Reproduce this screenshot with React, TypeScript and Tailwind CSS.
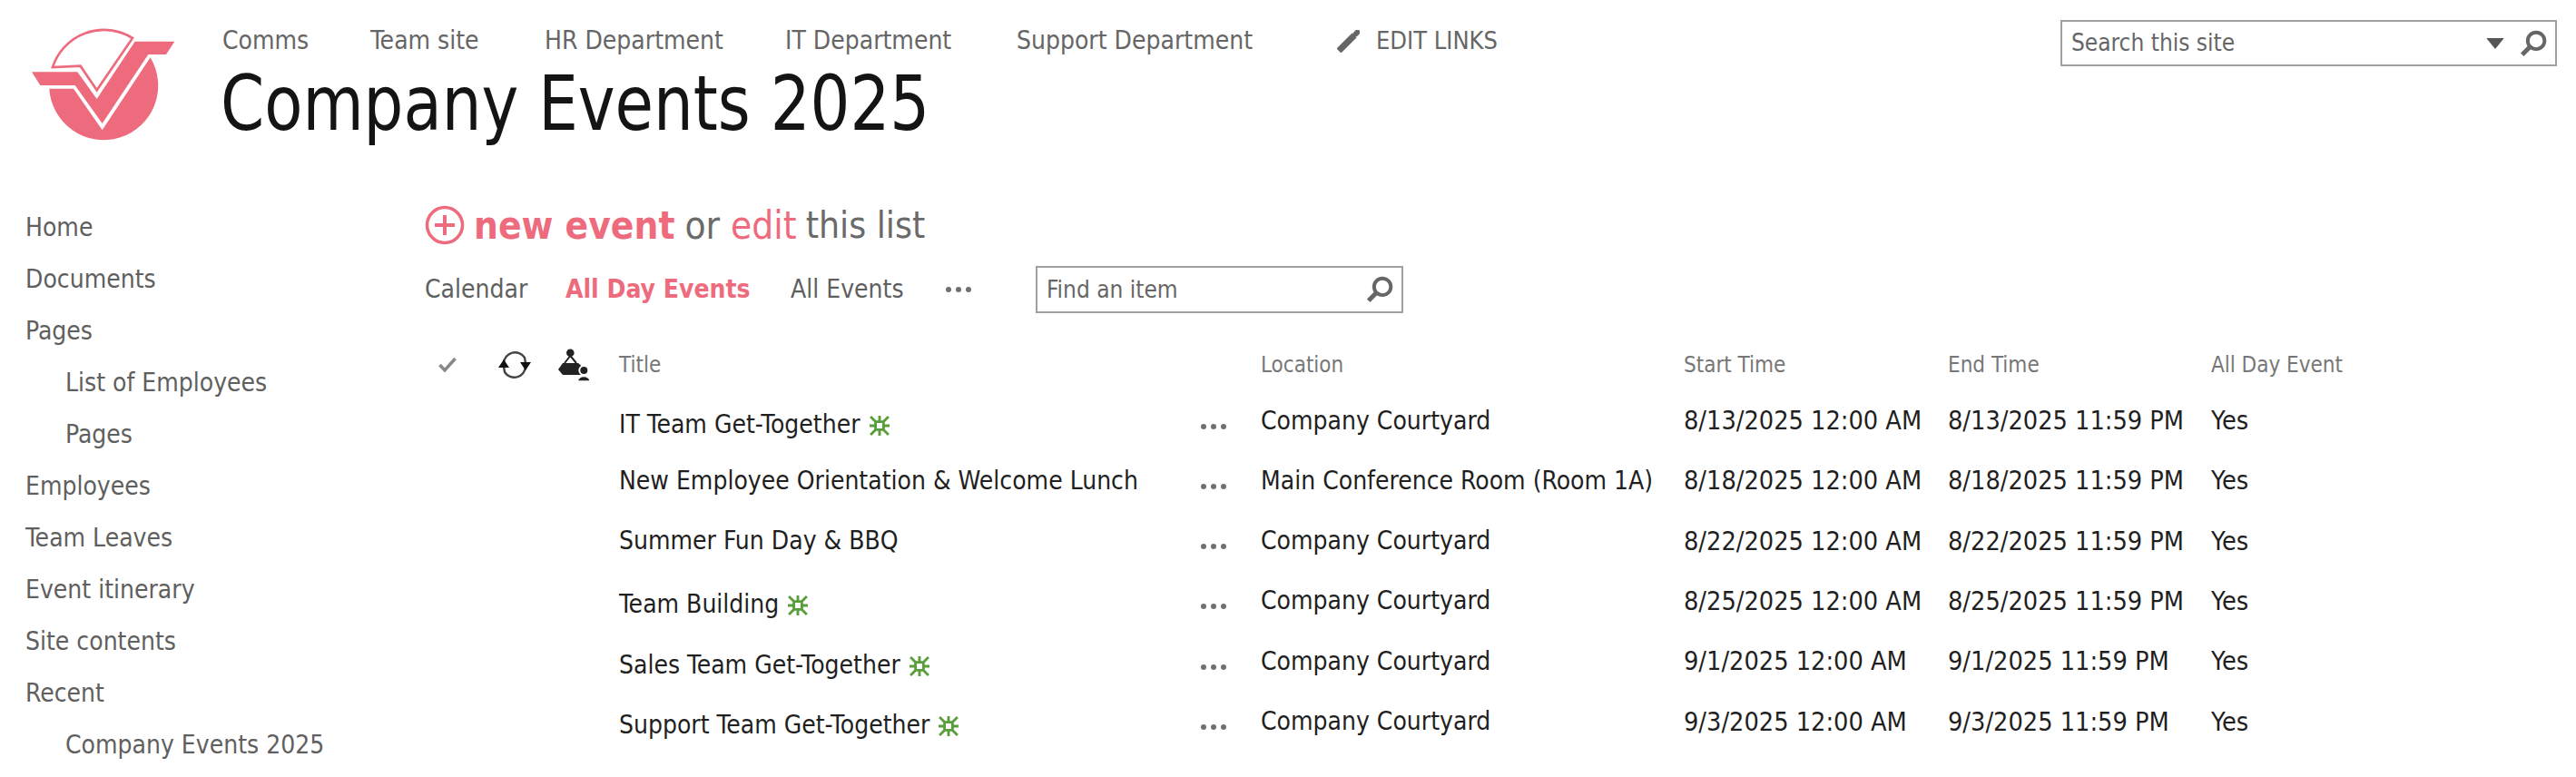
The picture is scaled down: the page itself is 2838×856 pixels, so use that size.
const font = "[font-family:'DejaVu_Sans_Condensed','DejaVu_Sans',sans-serif]"

const pink = 'text-[#ee6b7e]'

const topLinks = [
  { label: 'Comms', className: 'w-[163px]' },
  { label: 'Team site', className: 'w-[192px]' },
  { label: 'HR Department', className: 'w-[265px]' },
  { label: 'IT Department', className: 'w-[255px]' },
  { label: 'Support Department', className: 'w-[353px]' },
]

const sideLinks = [
  { label: 'Home' },
  { label: 'Documents' },
  { label: 'Pages' },
  { label: 'List of Employees', sub: true },
  { label: 'Pages', sub: true },
  { label: 'Employees' },
  { label: 'Team Leaves' },
  { label: 'Event itinerary' },
  { label: 'Site contents' },
  { label: 'Recent' },
  { label: 'Company Events 2025', sub: true },
]

const rows = [
  { title: 'IT Team Get-Together', isNew: true, location: 'Company Courtyard', start: '8/13/2025 12:00 AM', end: '8/13/2025 11:59 PM', h: 'h-[65px]' },
  { title: 'New Employee Orientation & Welcome Lunch', isNew: false, location: 'Main Conference Room (Room 1A)', start: '8/18/2025 12:00 AM', end: '8/18/2025 11:59 PM', h: 'h-[67px]' },
  { title: 'Summer Fun Day & BBQ', isNew: false, location: 'Company Courtyard', start: '8/22/2025 12:00 AM', end: '8/22/2025 11:59 PM', h: 'h-[66px]' },
  { title: 'Team Building', isNew: true, location: 'Company Courtyard', start: '8/25/2025 12:00 AM', end: '8/25/2025 11:59 PM', h: 'h-[66px]' },
  { title: 'Sales Team Get-Together', isNew: true, location: 'Company Courtyard', start: '9/1/2025 12:00 AM', end: '9/1/2025 11:59 PM', h: 'h-[67px]' },
  { title: 'Support Team Get-Together', isNew: true, location: 'Company Courtyard', start: '9/3/2025 12:00 AM', end: '9/3/2025 11:59 PM', h: 'h-[66px]' },
]

const Logo = () => (
  <svg viewBox="0 0 720 510" className="w-[240px] h-[170px] shrink-0">
    <path d="M174 222 A178 178 0 0 1 438 126 L320 298 L266 218 Z" fill="none" stroke="#ee6b7e" strokeWidth="8" />
    <path d="M105 238 L256 238 L320 327 L446 137 L577 137 L549 180 L490 180 L338 408 L248 282 L133 282 Z" fill="#ee6b7e" />
    <path d="M163 293 L243 293 L338 430 L497 190 A180 180 0 1 1 163 293 Z" fill="#ee6b7e" />
  </svg>
)

const SearchIcon = ({ className }: { className: string }) => (
  <svg viewBox="0 0 26 26" className={className}>
    <circle cx="15.5" cy="10.5" r="7.5" fill="none" stroke="#666" strokeWidth="3.2" />
    <path d="M9.5 16.5 L3 23" stroke="#666" strokeWidth="4" />
  </svg>
)

const Dots = () => (
  <svg viewBox="0 0 30 6" className="w-[30px] h-[6px]">
    <circle cx="4" cy="3" r="3" fill="#707070" />
    <circle cx="15" cy="3" r="3" fill="#707070" />
    <circle cx="26" cy="3" r="3" fill="#707070" />
  </svg>
)

const NewIcon = () => (
  <svg viewBox="0 0 20 20" className="w-[22px] h-[22px] ml-[10px] inline-block align-[-3px]">
    <path d="M6 6 H14 V14 H6 Z M10 0 V6 M10 14 V20 M0 10 H6 M14 10 H20 M1 1 L6 6 M19 1 L14 6 M1 19 L6 14 M19 19 L14 14" fill="none" stroke="#5a9e3c" strokeWidth="2.6" />
  </svg>
)

const App = () => {
  return (
    <div className={`w-[2838px] h-[856px] overflow-hidden bg-white ${font}`}>
      <header className="flex h-[200px]">
        <Logo />
        <div className="pl-[5px] pt-[26px]">
          <nav className="flex items-center h-[38px] text-[28px] text-[#666]">
            {topLinks.map((l) => (
              <span key={l.label} className={l.className}>{l.label}</span>
            ))}
            <svg viewBox="0 0 25 25" className="w-[25px] h-[25px] mr-[18px]">
              <path d="M2 23 L19 6" stroke="#666" strokeWidth="7" />
              <path d="M20.5 4.5 L22.5 2.5" stroke="#666" strokeWidth="6" strokeLinecap="round" />
            </svg>
            <span className="text-[27px]">EDIT LINKS</span>
          </nav>
          <h1 className="text-[84px] leading-[100px] text-[#141414] -ml-[2px] origin-left scale-x-[0.913] whitespace-nowrap">Company Events 2025</h1>
        </div>
        <div className="ml-auto mr-[21px] mt-[22px] w-[547px] h-[51px] border-2 border-[#a0a0a0] flex items-center pl-[10px] pr-[8px] text-[26px] text-[#666]">
          <span className="flex-1">Search this site</span>
          <svg viewBox="0 0 18 12" className="w-[20px] h-[13px] mr-[16px]">
            <path d="M0 1 H18 L9 12 Z" fill="#555" />
          </svg>
          <SearchIcon className="w-[32px] h-[32px]" />
        </div>
      </header>

      <div className="flex">
        <aside className="w-[468px] shrink-0 pt-[22px] text-[28px] text-[#5f5f5f]">
          {sideLinks.map((l, i) => (
            <div key={i} className={`h-[57px] leading-[57px] ${l.sub ? 'pl-[72px]' : 'pl-[28px]'}`}>{l.label}</div>
          ))}
        </aside>

        <main className="flex-1">
          <div className="flex items-center h-[48px] mt-[24px] text-[42px] text-[#6a6a6a]">
            <svg viewBox="0 0 44 44" className="w-[44px] h-[44px] mr-[10px]">
              <circle cx="22" cy="22" r="19.5" fill="none" stroke="#ee6b7e" strokeWidth="3.5" />
              <path d="M22 11 V33 M11 22 H33" stroke="#ee6b7e" strokeWidth="4" />
            </svg>
            <span className={`font-bold ${pink}`}>new event</span>
            <span className="ml-[11px]">or</span>
            <span className={`ml-[12px] ${pink}`}>edit</span>
            <span className="ml-[10px] text-[40.5px]">this list</span>
          </div>

          <div className="flex items-center h-[50px] mt-[22px] text-[28px] text-[#5f5f5f]">
            <span className="w-[155px]">Calendar</span>
            <span className={`w-[248px] font-bold ${pink}`}>All Day Events</span>
            <span className="w-[170px]">All Events</span>
            <Dots />
            <div className="ml-[70px] w-[405px] h-[52px] border-2 border-[#a0a0a0] flex items-center justify-between pl-[10px] pr-[8px] text-[26px] text-[#666]">
              <span>Find an item</span>
              <SearchIcon className="w-[32px] h-[32px]" />
            </div>
          </div>

          <div className="flex items-center h-[58px] mt-[29px] text-[24px] text-[#777]">
            <div className="w-[214px] flex items-center">
              <svg viewBox="0 0 20 18" className="w-[20px] h-[18px] ml-[15px] mr-[46px]">
                <path d="M1.5 9 L7 15 L18.5 2" fill="none" stroke="#888" strokeWidth="3.5" />
              </svg>
              <svg viewBox="0 0 36 30" className="w-[36px] h-[30px] mr-[30px]">
                <path d="M6 13 A12.5 12.5 0 0 1 29 7 L30 13 M30 17 A12.5 12.5 0 0 1 7 23 L6 17" fill="none" stroke="#444" strokeWidth="2.4" />
                <path d="M0 18 L6 9 L12 18 Z M24 12 L36 12 L30 21 Z" fill="#111" />
              </svg>
              <svg viewBox="0 0 36 36" className="w-[36px] h-[36px]">
                <circle cx="13.3" cy="4.7" r="4.3" fill="#222" />
                <path d="M13.3 8 L7 16 M13.3 8 L20 16" stroke="#222" strokeWidth="2" />
                <path d="M5 16 H22 L25.5 19 V29 H5 L0 23 Z" fill="#222" />
                <circle cx="28.3" cy="24" r="5" fill="#222" stroke="#fff" strokeWidth="2" />
                <path d="M21 36 A7.5 7.5 0 0 1 35.5 36 Z" fill="#222" stroke="#fff" strokeWidth="1.5" />
              </svg>
            </div>
            <span className="w-[707px]">Title</span>
            <span className="w-[466px]">Location</span>
            <span className="w-[291px]">Start Time</span>
            <span className="w-[290px]">End Time</span>
            <span>All Day Event</span>
          </div>

          <div className="text-[28px] text-[#1f1f1f]">
            {rows.map((r) => (
              <div key={r.start} className={`flex items-center ${r.h}`}>
                <div className="w-[214px] shrink-0" />
                <div className={`w-[640px] shrink-0 whitespace-nowrap ${r.isNew ? 'pt-[8px]' : ''}`}>
                  {r.title}
                  {r.isNew && <NewIcon />}
                </div>
                <div className="w-[67px] shrink-0 pt-[12px] flex"><Dots /></div>
                <div className="w-[466px] shrink-0 whitespace-nowrap">{r.location}</div>
                <div className="w-[291px] shrink-0 whitespace-nowrap text-[28.6px]">{r.start}</div>
                <div className="w-[290px] shrink-0 whitespace-nowrap text-[28.6px]">{r.end}</div>
                <div className="text-[28.6px]">Yes</div>
              </div>
            ))}
          </div>
        </main>
      </div>
    </div>
  )
}

export default App
